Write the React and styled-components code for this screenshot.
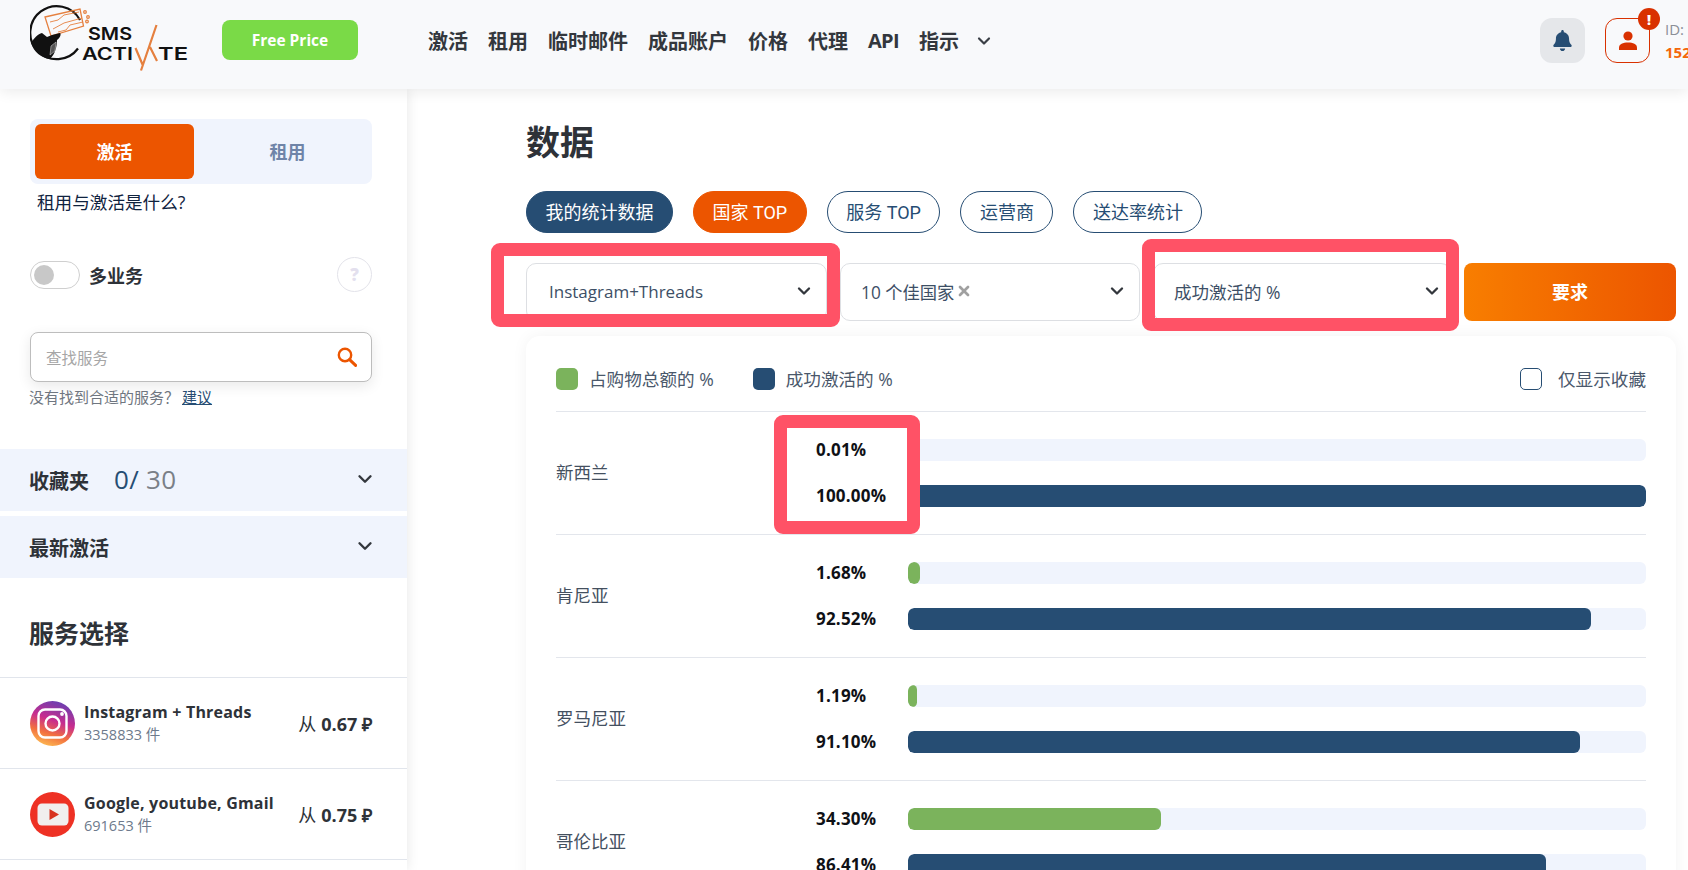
import React from "react";
import styled, { createGlobalStyle } from "styled-components";
import { ChevronDown, X } from "lucide-react";
import { FaBell } from "react-icons/fa";

const NAVY = "#264d73";
const ORANGE = "#ec5500";
const INK = "#2e3238";
const FONT = `"Open Sans", "Noto Sans CJK SC", sans-serif`;

const Global = createGlobalStyle`
  html, body { margin: 0; padding: 0; height: 100%; overflow: hidden; background: #fff; }
  body { font-family: ${FONT}; color: ${INK}; }
  * { box-sizing: border-box; }
`;

const Page = styled.div`
  height: 100vh;
  overflow: hidden;
  display: flex;
  flex-direction: column;
`;

/* ---------- header ---------- */
const Header = styled.header`
  position: relative;
  z-index: 3;
  flex: none;
  height: 89px;
  background: #f8f9fb;
  box-shadow: 0 2px 14px rgba(0, 0, 0, 0.09);
  display: flex;
  align-items: center;
  padding-left: 30px;
  overflow: hidden;
`;
const LogoWrap = styled.div`
  flex: none;
  width: 162px;
  height: 72px;
  margin-top: -8px;
`;
const FreeButton = styled.div`
  flex: none;
  width: 136px;
  height: 40px;
  margin: -10px 0 0 30px;
  border-radius: 8px;
  background: #7ada47;
  color: #fff;
  font-weight: 700;
  font-size: 15.5px;
  display: flex;
  align-items: center;
  justify-content: center;
`;
const Nav = styled.nav`
  display: flex;
  align-items: center;
  gap: 20px;
  margin: -8px 0 0 70px;
  font-size: 20px;
  font-weight: 700;
  color: #33373d;
  white-space: nowrap;
`;
const NavLatin = styled.span`
  letter-spacing: -0.7px;
`;
const NavChevron = styled.span`
  display: flex;
  margin-left: -5px;
  color: #3a3f46;
`;
const HeaderRight = styled.div`
  margin-left: auto;
  display: flex;
  align-items: center;
  margin-top: -8px;
  width: 148px;
  flex: none;
`;
const BellBox = styled.div`
  flex: none;
  width: 45px;
  height: 45px;
  border-radius: 12px;
  background: #e5e7ea;
  display: flex;
  align-items: center;
  justify-content: center;
  color: ${NAVY};
`;
const Avatar = styled.div`
  position: relative;
  flex: none;
  width: 45px;
  height: 45px;
  margin-left: 20px;
  border: 1px solid #d93100;
  border-radius: 12px;
  display: flex;
  align-items: center;
  justify-content: center;
`;
const Badge = styled.span`
  position: absolute;
  top: -11px;
  right: -11px;
  width: 22px;
  height: 22px;
  border-radius: 50%;
  background: #d93100;
  color: #fff;
  font-size: 14px;
  font-weight: 800;
  display: flex;
  align-items: center;
  justify-content: center;
`;
const Account = styled.div`
  flex: none;
  margin-left: 15px;
  display: flex;
  flex-direction: column;
  gap: 3px;
  font-size: 15px;
  line-height: 20px;
`;
const AccountId = styled.span`
  color: #8b8f96;
`;
const AccountNumber = styled.span`
  color: #f4670a;
  font-weight: 700;
`;

/* ---------- layout ---------- */
const Body = styled.div`
  flex: 1;
  min-height: 0;
  display: flex;
`;
const Sidebar = styled.aside`
  position: relative;
  z-index: 2;
  flex: none;
  width: 407px;
  padding-top: 30px;
  background: #fff;
  box-shadow: 0 0 12px rgba(0, 0, 0, 0.1);
`;
const SidePad = styled.div`
  padding: 0 35px 0 30px;
`;

const ModeSwitch = styled.div`
  height: 65px;
  padding: 5px;
  border-radius: 8px;
  background: #f0f4fd;
  display: grid;
  grid-template-columns: 159px 1fr;
`;
const ModeButton = styled.div`
  border-radius: 6px;
  display: flex;
  align-items: center;
  justify-content: center;
  font-size: 18px;
  font-weight: 700;
  padding: 0 0 2px ${(p) => (p.$active ? 0 : 14)}px;
  background: ${(p) => (p.$active ? ORANGE : "transparent")};
  color: ${(p) => (p.$active ? "#fff" : "#6f84a8")};
`;
const ModeHelp = styled.div`
  margin: 6px 0 0 7px;
  font-size: 17.6px;
  line-height: 25px;
  color: #10233f;
`;
const MultiRow = styled.div`
  margin-top: 42px;
  display: flex;
  align-items: center;
  height: 35px;
`;
const Toggle = styled.div`
  width: 50px;
  height: 28px;
  border: 1px solid #cfcfcf;
  border-radius: 14px;
  padding: 3px;
  display: flex;
`;
const Knob = styled.span`
  width: 20px;
  height: 20px;
  border-radius: 50%;
  background: #c8c8c8;
`;
const MultiLabel = styled.span`
  margin-left: 9px;
  font-size: 18px;
  font-weight: 700;
`;
const HelpCircle = styled.span`
  margin-left: auto;
  width: 35px;
  height: 35px;
  border: 1px solid #e3e3ea;
  border-radius: 50%;
  display: flex;
  align-items: center;
  justify-content: center;
  color: #e3e0ee;
  font-weight: 800;
  font-size: 17px;
`;
const SearchBox = styled.div`
  margin-top: 40px;
  height: 50px;
  border: 1px solid #bdbdbd;
  border-radius: 8px;
  background: #fff;
  box-shadow: 0 4px 14px rgba(0, 0, 0, 0.09);
  padding: 0 14px 0 15px;
  display: flex;
  align-items: center;
  justify-content: space-between;
  font-size: 15.5px;
  color: #a6a6a6;
`;
const Hint = styled.div`
  margin: 4px 0 0 -1px;
  font-size: 15px;
  line-height: 22px;
  color: #6f7680;
`;
const HintLink = styled.span`
  margin-left: 3px;
  color: ${NAVY};
  text-decoration: underline;
`;
const Band = styled.div`
  height: 62px;
  margin-top: ${(p) => p.$top}px;
  padding: 0 31px 0 29px;
  background: #f0f4fd;
  display: flex;
  align-items: center;
  justify-content: space-between;
`;
const BandTitle = styled.div`
  display: flex;
  align-items: center;
  font-size: 20px;
  font-weight: 700;
`;
const Counter = styled.span`
  margin-left: 25px;
  font-size: 26px;
  line-height: 30px;
  padding-bottom: 3px;
  font-weight: 400;
  letter-spacing: 0.3px;
  color: ${NAVY};
`;
const CounterMax = styled.span`
  color: #7a7f87;
`;
const BandChevron = styled(ChevronDown)`
  flex: none;
  margin-top: -3px;
  color: #33373d;
`;
const SideHeading = styled.h2`
  margin: 38px 0 27px 29px;
  font-size: 25px;
  line-height: 34px;
  font-weight: 700;
`;
const ServiceRow = styled.div`
  height: 91px;
  border-top: 1px solid #e1e5ec;
  padding: 0 35px 0 30px;
  display: flex;
  align-items: center;
`;
const ServiceIcon = styled.svg`
  flex: none;
  width: 45px;
  height: 45px;
`;
const ServiceInfo = styled.div`
  margin-left: 9px;
  display: flex;
  flex-direction: column;
`;
const ServiceName = styled.span`
  font-size: 16px;
  line-height: 24px;
  font-weight: 700;
  letter-spacing: 0.2px;
`;
const ServiceCount = styled.span`
  font-size: 14.5px;
  line-height: 22px;
  color: #6d7a8c;
`;
const Price = styled.div`
  margin-left: auto;
  font-size: 18px;
  white-space: nowrap;
`;
const PriceValue = styled.b`
  font-weight: 700;
  margin-left: 5px;
`;

/* ---------- main ---------- */
const Main = styled.main`
  flex: 1;
  min-width: 0;
  padding: 25px 12px 0 119px;
`;
const Title = styled.h1`
  margin: 0;
  font-size: 34px;
  line-height: 56px;
  font-weight: 700;
`;
const Tabs = styled.div`
  margin-top: 21px;
  display: flex;
  gap: 20px;
`;
const Tab = styled.div`
  height: 42px;
  padding: 0 18.5px 3px;
  border-radius: 21px;
  border: 1px solid ${(p) => p.$bg || NAVY};
  background: ${(p) => p.$bg || "transparent"};
  color: ${(p) => (p.$bg ? "#fff" : NAVY)};
  font-family: Roboto, "Noto Sans CJK SC", sans-serif;
  font-size: 18px;
  white-space: nowrap;
  display: flex;
  align-items: center;
`;
const Filters = styled.div`
  margin-top: 30px;
  display: grid;
  grid-template-columns: 301px 300px 298px 1fr;
  column-gap: 13px;
  height: 58px;
`;
const Select = styled.div`
  position: relative;
  border: 1px solid #dddfe3;
  border-radius: 10px;
  padding: 0 ${(p) => p.$padEnd || 12}px 2px ${(p) => p.$pad || 20}px;
  display: flex;
  align-items: center;
  justify-content: space-between;
  color: #3d4f66;
`;
const SelectText = styled.span`
  display: flex;
  align-items: center;
  gap: 2px;
  font-size: ${(p) => p.$size || 17.3}px;
`;
const Chevron = styled(ChevronDown)`
  flex: none;
  color: #33373d;
`;
const Frame = styled.span`
  position: absolute;
  z-index: 1;
  top: ${(p) => p.$t}px;
  right: ${(p) => p.$r}px;
  bottom: ${(p) => p.$b}px;
  left: ${(p) => p.$l}px;
  border: 13px solid #ff5266;
  border-radius: 9px;
  pointer-events: none;
`;
const RequestButton = styled.div`
  border-radius: 8px;
  background: linear-gradient(90deg, #f87e00, ${ORANGE});
  color: #fff;
  font-size: 18px;
  font-weight: 700;
  padding-bottom: 2px;
  display: flex;
  align-items: center;
  justify-content: center;
`;
const Card = styled.section`
  margin-top: 15px;
  padding: 0 30px;
  border-radius: 14px;
  background: #fff;
  box-shadow: 0 0 16px rgba(0, 0, 0, 0.05);
`;
const Legend = styled.div`
  height: 75px;
  padding-top: 10px;
  display: flex;
  align-items: center;
  font-size: 17.6px;
  color: #4a586b;
`;
const Swatch = styled.span`
  flex: none;
  width: 22px;
  height: 22px;
  border-radius: 5px;
  background: ${(p) => p.$color};
`;
const LegendItem = styled.span`
  display: flex;
  align-items: center;
  gap: 11px;
  margin-right: 39px;
`;
const FavCheck = styled.span`
  margin-left: auto;
  display: flex;
  align-items: center;
  gap: 16px;
`;
const CheckBox = styled.span`
  width: 22px;
  height: 22px;
  border: 1px solid ${NAVY};
  border-radius: 5px;
`;
const DataRow = styled.div`
  position: relative;
  height: 123px;
  border-top: 1px solid #e3e6ec;
  display: grid;
  grid-template-columns: 260px 1fr;
  align-items: center;
`;
const CountryName = styled.div`
  font-size: 17.5px;
  padding-bottom: 4px;
  color: #44505f;
`;
const Metrics = styled.div`
  display: flex;
  flex-direction: column;
  gap: 24px;
`;
const Metric = styled.div`
  display: grid;
  grid-template-columns: 92px 1fr;
  align-items: center;
  height: 22px;
`;
const Value = styled.span`
  font-size: 17px;
  line-height: 20px;
  padding-bottom: 1px;
  letter-spacing: 0.2px;
  font-weight: 700;
  color: #0f1116;
`;
const Track = styled.div`
  height: 22px;
  border-radius: 6px;
  background: #f0f4fd;
  overflow: hidden;
`;
const Fill = styled.div`
  height: 100%;
  border-radius: 6px;
  background: ${(p) => p.$color};
`;

/* ---------- drawings ---------- */
const LOGO_TEXT = { fontFamily: "Inter, sans-serif", fontWeight: 600, fontSize: 17.5, fill: "#111" };

const Logo = () => (
  <svg width="162" height="72" viewBox="30 5 162 72" fill="none">
    <path d="M80 20 A26.5 26.5 0 1 0 78 48.5" stroke="#111" strokeWidth="2.2" />
    <g stroke="#e5803f" strokeWidth="1.3">
      <path d="M45 17 L80 9 L83.5 26 L51 36 Z" />
      <path d="M50 22 L58 20 L64 15 L79 12 M53 29 L64 23 L82 18 M58 32 L66 30 L70 25 L83 22" strokeWidth="0.9" />
      <circle cx="85" cy="12" r="1.3" />
      <circle cx="88" cy="17" r="1.3" />
      <circle cx="87" cy="21.5" r="1.3" />
    </g>
    <path
      d="M31 43 C34 38 38 34 42 33 L47 37 L52 35 L60 33 C61.5 34 60 38 57 40 C57 47 55 54 50 59 C41 58 34 52 31 43 Z"
      fill="#111"
    />
    <path d="M51 46 L56 42 L55 51 L50 55 Z" fill="#555" stroke="#ddd" strokeWidth="0.5" />
    <text x="88" y="40" textLength="44" lengthAdjust="spacingAndGlyphs" {...LOGO_TEXT}>SMS</text>
    <text x="82" y="60" textLength="51" lengthAdjust="spacingAndGlyphs" {...LOGO_TEXT}>ACTI</text>
    <text x="158" y="60" textLength="30" lengthAdjust="spacingAndGlyphs" {...LOGO_TEXT}>TE</text>
    <path d="M156.5 25 L141 70.5 M135.5 48 L142.5 64.5 M150 47 L157 61" stroke="#e5803f" strokeWidth="2.2" />
  </svg>
);

const UserIcon = () => (
  <svg width="22" height="22" viewBox="0 0 22 22" fill="#d93100">
    <circle cx="11" cy="6" r="4.6" />
    <path d="M2 20 v-2.5 C2 14 6 12.4 11 12.4 s9 1.6 9 5.1 V20 Z" />
  </svg>
);

const SearchIcon = () => (
  <svg width="20" height="20" viewBox="0 0 20 20" fill="none" stroke={ORANGE}>
    <circle cx="8" cy="8" r="6.2" strokeWidth="2.4" />
    <path d="M12.6 12.6 L18.6 18.4" strokeWidth="3" strokeLinecap="round" />
  </svg>
);

const InstagramIcon = () => (
  <ServiceIcon viewBox="0 0 45 45">
    <defs>
      <linearGradient id="ig" x1="0.25" y1="1" x2="0.6" y2="0">
        <stop offset="0" stopColor="#fec053" />
        <stop offset="0.3" stopColor="#f2703f" />
        <stop offset="0.6" stopColor="#c72c8f" />
        <stop offset="1" stopColor="#6c3fb0" />
      </linearGradient>
    </defs>
    <circle cx="22.5" cy="22.5" r="22.5" fill="url(#ig)" />
    <rect x="8.5" y="8.5" width="28" height="28" rx="6.5" fill="none" stroke="#fff" strokeWidth="2.4" />
    <circle cx="22.5" cy="22.5" r="7" fill="none" stroke="#fff" strokeWidth="2.4" />
    <circle cx="32" cy="13" r="1.9" fill="#fff" />
  </ServiceIcon>
);

const YoutubeIcon = () => (
  <ServiceIcon viewBox="0 0 45 45">
    <circle cx="22.5" cy="22.5" r="22.5" fill="#ee3124" />
    <rect x="7.5" y="11.5" width="31" height="22" rx="4.5" fill="#f1eeee" />
    <path d="M19.5 17 L29 22.5 L19.5 28 Z" fill="#d8321f" />
  </ServiceIcon>
);

const rows = [
  { name: "新西兰", a: 0.01, b: 100, a2: "0.01", b2: "100.00", frame: true },
  { name: "肯尼亚", a: 1.68, b: 92.52, a2: "1.68", b2: "92.52" },
  { name: "罗马尼亚", a: 1.19, b: 91.1, a2: "1.19", b2: "91.10" },
  { name: "哥伦比亚", a: 34.3, b: 86.41, a2: "34.30", b2: "86.41" },
];

export default function App() {
  return (
    <Page>
      <Global />
      <Header>
        <LogoWrap><Logo /></LogoWrap>
        <FreeButton>Free Price</FreeButton>
        <Nav>
          <span>激活</span>
          <span>租用</span>
          <span>临时邮件</span>
          <span>成品账户</span>
          <span>价格</span>
          <span>代理</span>
          <NavLatin>API</NavLatin>
          <span>指示</span>
          <NavChevron><ChevronDown size={20} strokeWidth={2.6} /></NavChevron>
        </Nav>
        <HeaderRight>
          <BellBox><FaBell size={21} /></BellBox>
          <Avatar>
            <UserIcon />
            <Badge>!</Badge>
          </Avatar>
          <Account>
            <AccountId>ID:</AccountId>
            <AccountNumber>1523</AccountNumber>
          </Account>
        </HeaderRight>
      </Header>
      <Body>
        <Sidebar>
          <SidePad>
            <ModeSwitch>
              <ModeButton $active>激活</ModeButton>
              <ModeButton>租用</ModeButton>
            </ModeSwitch>
            <ModeHelp>租用与激活是什么?</ModeHelp>
            <MultiRow>
              <Toggle><Knob /></Toggle>
              <MultiLabel>多业务</MultiLabel>
              <HelpCircle>?</HelpCircle>
            </MultiRow>
            <SearchBox>
              <span>查找服务</span>
              <SearchIcon />
            </SearchBox>
            <Hint>没有找到合适的服务？<HintLink>建议</HintLink></Hint>
          </SidePad>
          <Band $top={41}>
            <BandTitle>收藏夹<Counter>0/ <CounterMax>30</CounterMax></Counter></BandTitle>
            <BandChevron size={22} strokeWidth={2.6} />
          </Band>
          <Band $top={5}>
            <BandTitle>最新激活</BandTitle>
            <BandChevron size={22} strokeWidth={2.6} />
          </Band>
          <SideHeading>服务选择</SideHeading>
          <ServiceRow>
            <InstagramIcon />
            <ServiceInfo>
              <ServiceName>Instagram + Threads</ServiceName>
              <ServiceCount>3358833 件</ServiceCount>
            </ServiceInfo>
            <Price>从<PriceValue>0.67 ₽</PriceValue></Price>
          </ServiceRow>
          <ServiceRow>
            <YoutubeIcon />
            <ServiceInfo>
              <ServiceName>Google, youtube, Gmail</ServiceName>
              <ServiceCount>691653 件</ServiceCount>
            </ServiceInfo>
            <Price>从<PriceValue>0.75 ₽</PriceValue></Price>
          </ServiceRow>
          <ServiceRow />
        </Sidebar>
        <Main>
          <Title>数据</Title>
          <Tabs>
            <Tab $bg={NAVY}>我的统计数据</Tab>
            <Tab $bg={ORANGE}>国家 TOP</Tab>
            <Tab>服务 TOP</Tab>
            <Tab>运营商</Tab>
            <Tab>送达率统计</Tab>
          </Tabs>
          <Filters>
            <Select $pad={22}>
              <SelectText $size={17}>Instagram+Threads</SelectText>
              <Chevron size={20} strokeWidth={2.8} />
              <Frame $t={-21} $r={-14} $b={-7} $l={-36} />
            </Select>
            <Select>
              <SelectText>10 个佳国家<X size={16} strokeWidth={4} color="#a0a0a0" /></SelectText>
              <Chevron size={20} strokeWidth={2.8} />
            </Select>
            <Select $padEnd={8}>
              <SelectText $size={17.5}>成功激活的 %</SelectText>
              <Chevron size={20} strokeWidth={2.8} />
              <Frame $t={-25} $r={-9} $b={-11} $l={-12} />
            </Select>
            <RequestButton>要求</RequestButton>
          </Filters>
          <Card>
            <Legend>
              <LegendItem><Swatch $color="#7bb35c" />占购物总额的 %</LegendItem>
              <LegendItem><Swatch $color={NAVY} />成功激活的 %</LegendItem>
              <FavCheck><CheckBox />仅显示收藏</FavCheck>
            </Legend>
            {rows.map((r) => (
              <DataRow key={r.name}>
                <CountryName>{r.name}</CountryName>
                <Metrics>
                  <Metric>
                    <Value>{r.a2}%</Value>
                    <Track><Fill $color="#7bb35c" style={{ width: `${r.a}%` }} /></Track>
                  </Metric>
                  <Metric>
                    <Value>{r.b2}%</Value>
                    <Track><Fill $color={NAVY} style={{ width: `${r.b}%` }} /></Track>
                  </Metric>
                </Metrics>
                {r.frame && <Frame $t={3} $r={726} $b={0} $l={218} />}
              </DataRow>
            ))}
          </Card>
        </Main>
      </Body>
    </Page>
  );
}
